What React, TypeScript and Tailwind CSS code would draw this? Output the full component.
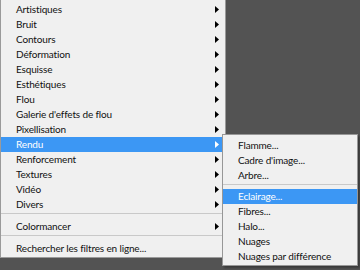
import React from "react";

const mainItems: { label: string; sub?: boolean; active?: boolean }[] = [
  { label: "Artistiques", sub: true },
  { label: "Bruit", sub: true },
  { label: "Contours", sub: true },
  { label: "Déformation", sub: true },
  { label: "Esquisse", sub: true },
  { label: "Esthétiques", sub: true },
  { label: "Flou", sub: true },
  { label: "Galerie d'effets de flou", sub: true },
  { label: "Pixellisation", sub: true },
  { label: "Rendu", sub: true, active: true },
  { label: "Renforcement", sub: true },
  { label: "Textures", sub: true },
  { label: "Vidéo", sub: true },
  { label: "Divers", sub: true },
];

function Arrow({ white }: { white?: boolean }) {
  return (
    <svg width="4" height="7" viewBox="0 0 4 7" className="absolute right-[6px] top-[4px]">
      <polygon points="0,0 4,3.5 0,7" fill={white ? "#ffffff" : "#000000"} />
    </svg>
  );
}

function Row({ label, sub, active }: { label: string; sub?: boolean; active?: boolean }) {
  return (
    <div
      className={
        "relative h-[15px] leading-[15px] pl-[15px] whitespace-nowrap " +
        (active ? "bg-[#3c97f4] text-white" : "text-[#111111]")
      }
    >
      {label}
      {sub && <Arrow white={active} />}
    </div>
  );
}

function Sep() {
  return (
    <div className="pt-[1px] pb-[5px]">
      <div className="h-px bg-[#c9c9c9]" />
    </div>
  );
}

export default function App() {
  return (
    <div
      className="relative w-[360px] h-[270px] bg-[#535353] overflow-hidden text-[10px] tracking-[-0.15px]"
      style={{ fontFamily: 'Lato, "Noto Sans", sans-serif' }}
    >
      <div className="w-[226px] bg-[#f0f0f0] border-l border-r border-b border-[#9a9a9a] pt-[2px] pb-0 h-[258px]">
        {mainItems.map((it) => (
          <Row key={it.label} {...it} />
        ))}
        <Sep />
        <Row label="Colormancer" sub />
        <Sep />
        <Row label="Rechercher les filtres en ligne..." />
      </div>
      <div className="absolute left-[222px] top-[134px] w-[136px] h-[132px] bg-[#f0f0f0] border border-[#979797] pt-[3px] shadow-[2px_2px_2px_rgba(0,0,0,0.3)]">
        <Row label="Flamme..." />
        <Row label="Cadre d'image..." />
        <Row label="Arbre..." />
        <div className="pt-[1px] pb-[4px]">
          <div className="h-px bg-[#c9c9c9]" />
        </div>
        <Row label="Eclairage..." active />
        <Row label="Fibres..." />
        <Row label="Halo..." />
        <Row label="Nuages" />
        <Row label="Nuages par différence" />
      </div>
    </div>
  );
}
